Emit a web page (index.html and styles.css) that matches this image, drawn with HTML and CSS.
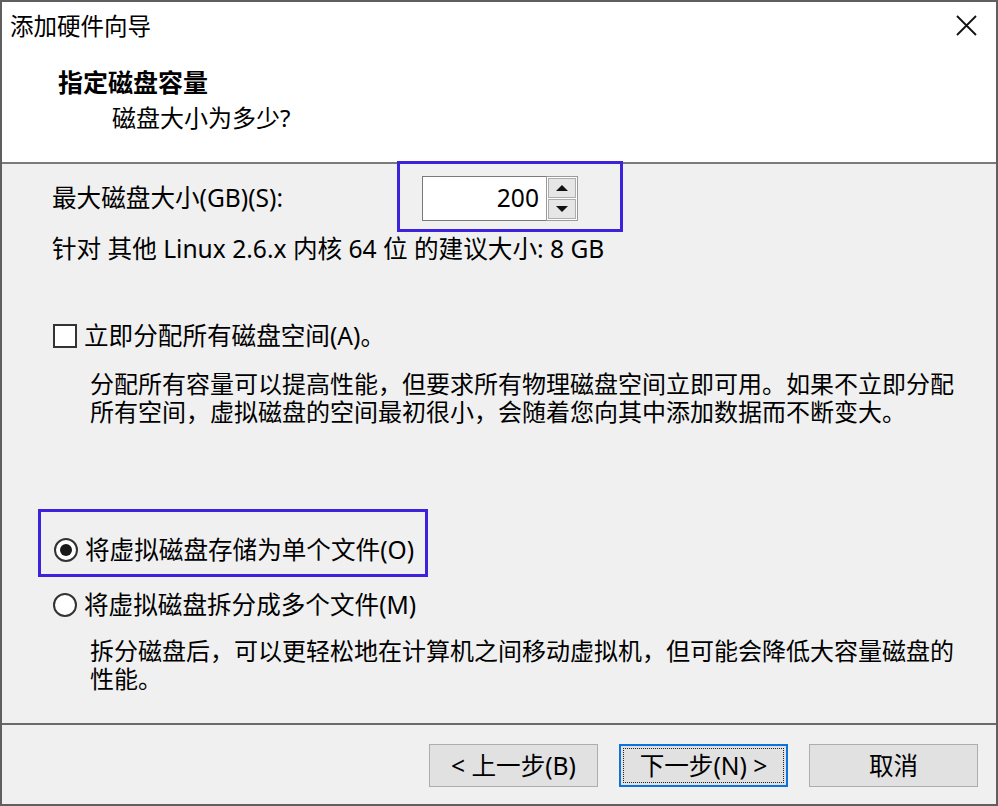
FILE: index.html
```html
<!DOCTYPE html>
<html lang="zh-CN">
<head>
    <meta charset="UTF-8">
    <meta name="viewport" content="width=device-width, initial-scale=1.0">
    <title>添加硬件向导</title>
    <link rel="stylesheet" href="styles.css">
</head>
<body>
    <div class="dialogo">
        <div class="barra-titulo">
            <span class="titulo">添加硬件向导</span>
            <svg class="cerrar" width="21" height="21" viewBox="0 0 21 21">
                <path d="M1 1 L20 20 M20 1 L1 20" stroke="#111" stroke-width="1.8" fill="none"/>
            </svg>
        </div>

        <div class="cabecera">
            <div class="cabecera-titulo">指定磁盘容量</div>
            <div class="cabecera-sub">磁盘大小为多少?</div>
        </div>

        <div class="contenido">
            <div class="fila-tamano">
                <label class="etiqueta-tamano">最大磁盘大小(GB)(S):</label>
                <div class="marco-resaltado marco-spinner">
                    <div class="spinner">
                        <div class="spinner-valor">200</div>
                        <div class="spinner-botones">
                            <div class="spin-btn"><span class="flecha-arriba"></span></div>
                            <div class="spin-btn"><span class="flecha-abajo"></span></div>
                        </div>
                    </div>
                </div>
            </div>

            <div class="recomendado">针对 其他 Linux 2.6.x 内核 64 位 的建议大小: 8 GB</div>

            <div class="opcion fila-check">
                <span class="casilla"></span>
                <span>立即分配所有磁盘空间(A)。</span>
            </div>
            <div class="descripcion desc-check">
                <div>分配所有容量可以提高性能，但要求所有物理磁盘空间立即可用。如果不立即分配</div>
                <div>所有空间，虚拟磁盘的空间最初很小，会随着您向其中添加数据而不断变大。</div>
            </div>

            <div class="marco-resaltado marco-radio">
                <div class="opcion">
                    <span class="radio marcado"></span>
                    <span>将虚拟磁盘存储为单个文件(O)</span>
                </div>
            </div>
            <div class="opcion fila-radio2">
                <span class="radio"></span>
                <span>将虚拟磁盘拆分成多个文件(M)</span>
            </div>
            <div class="descripcion desc-radio">
                <div>拆分磁盘后，可以更轻松地在计算机之间移动虚拟机，但可能会降低大容量磁盘的</div>
                <div>性能。</div>
            </div>
        </div>

        <div class="pie">
            <button class="boton">&lt; 上一步(B)</button>
            <button class="boton activo"><span class="foco">下一步(N) &gt;</span></button>
            <button class="boton">取消</button>
        </div>
    </div>
</body>
</html>
```

FILE: styles.css
```css
* {
    box-sizing: border-box;
}

body {
    margin: 0;
    font-family: "Noto Sans", "Noto Sans CJK SC", sans-serif;
    color: #000;
}

.dialogo {
    width: 998px;
    height: 806px;
    border: 2px solid #5f5f5f;
    display: flex;
    flex-direction: column;
    background: #f0f0f0;
    overflow: hidden;
}

/* barra de titulo */
.barra-titulo {
    height: 47px;
    flex-shrink: 0;
    background: #fff;
    display: flex;
    align-items: center;
    justify-content: space-between;
    padding: 0 19px 0 8px;
}

.titulo {
    font-size: 23.5px;
    line-height: 30px;
}

/* cabecera blanca */
.cabecera {
    height: 115px;
    flex-shrink: 0;
    background: #fff;
    border-bottom: 2px solid #7a7a7a;
    padding: 17px 0 0 56px;
}

.cabecera-titulo {
    font-size: 25px;
    font-weight: bold;
    line-height: 32px;
}

.cabecera-sub {
    font-size: 24px;
    line-height: 32px;
    margin: 4px 0 0 54px;
}

/* contenido */
.contenido {
    flex: 1;
    padding-left: 50px;
    font-size: 24.6px;
    line-height: 30px;
}

.fila-tamano {
    display: flex;
    align-items: center;
    margin-top: -3px;
}

.etiqueta-tamano {
    flex: 0 0 345px;
    padding-top: 3px;
}

.marco-resaltado {
    border: 3px solid #3c22dc;
}

.marco-spinner {
    padding: 12px 42px 8px 22px;
}

.spinner {
    display: flex;
    height: 45px;
}

.spinner-valor {
    width: 124px;
    background: #fff;
    border: 1px solid #7a7a7a;
    border-right: none;
    text-align: right;
    padding-right: 7px;
    line-height: 42px;
}

.spinner-botones {
    width: 32px;
    display: flex;
    flex-direction: column;
    border: 1px solid #9a9a9a;
    background: #fff;
    padding: 1px;
    gap: 1px;
}

.spin-btn {
    flex: 1;
    background: #e6e6e6;
    border: 1px solid #adadad;
    display: flex;
    align-items: center;
    justify-content: center;
}

.flecha-arriba {
    border-left: 6px solid transparent;
    border-right: 6px solid transparent;
    border-bottom: 6px solid #111;
}

.flecha-abajo {
    border-left: 6px solid transparent;
    border-right: 6px solid transparent;
    border-top: 6px solid #111;
}

.recomendado {
    margin-top: 2px;
}

.opcion {
    display: flex;
    align-items: center;
    gap: 7px;
    padding-left: 1px;
}

.fila-check {
    margin-top: 57px;
}

.casilla {
    width: 24px;
    height: 24px;
    background: #fff;
    border: 2px solid #333;
}

.descripcion {
    padding-left: 38px;
    font-size: 24px;
    line-height: 28px;
}

.desc-check {
    margin-top: 19px;
}

.marco-radio {
    width: 390px;
    margin: 83px 0 0 -14px;
    padding: 23px 0 9px 12px;
}

.radio {
    width: 24px;
    height: 24px;
    border: 2px solid #333;
    border-radius: 50%;
    background: #fff;
    display: flex;
    align-items: center;
    justify-content: center;
}

.radio.marcado::after {
    content: "";
    width: 12px;
    height: 12px;
    border-radius: 50%;
    background: #1a1a1a;
}

.fila-radio2 {
    margin-top: 13px;
}

.desc-radio {
    margin-top: 17px;
}

/* pie con botones */
.pie {
    height: 81px;
    flex-shrink: 0;
    border-top: 2px solid #6a6a6a;
    display: flex;
    justify-content: flex-end;
    align-items: flex-start;
    gap: 21px;
    padding: 19px 18px 0 0;
}

.boton {
    width: 169px;
    height: 43px;
    background: #e1e1e1;
    border: 1px solid #adadad;
    font-family: inherit;
    font-size: 24.6px;
    line-height: 30px;
    color: #000;
    padding: 0;
}

.boton.activo {
    border: 2px solid #0a74dc;
    padding: 2px;
}

.foco {
    display: flex;
    align-items: center;
    justify-content: center;
    height: 100%;
    border: 1px dotted #222;
}
```
